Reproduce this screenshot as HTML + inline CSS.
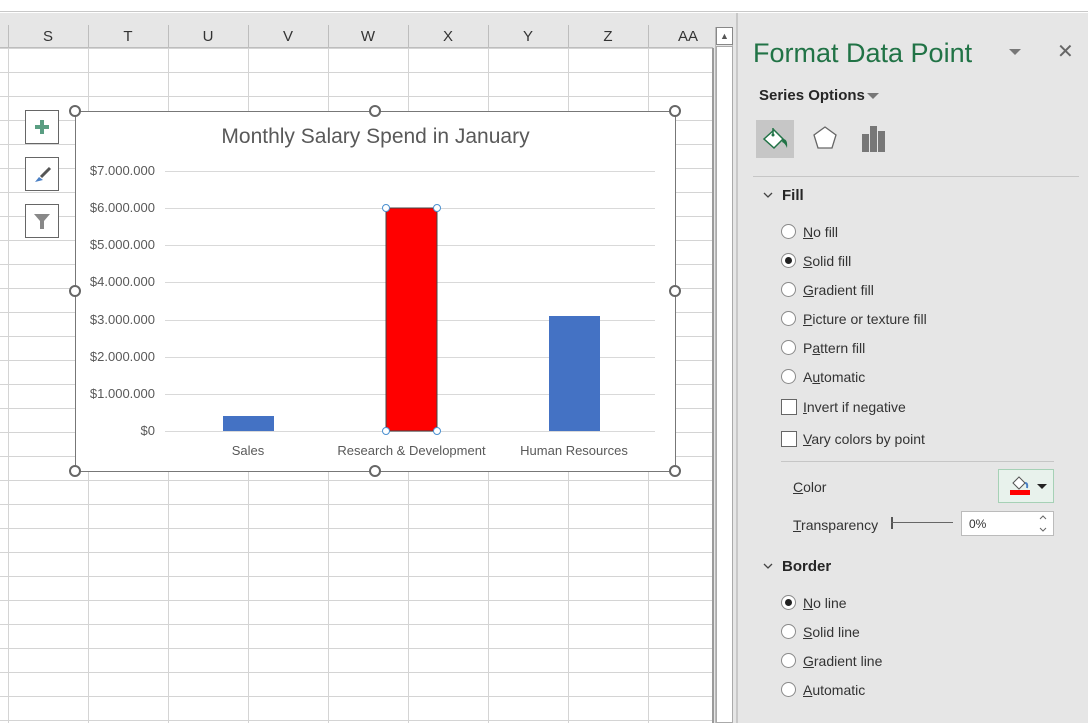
<!DOCTYPE html>
<html><head><style>
*{margin:0;padding:0;box-sizing:border-box}
body{width:1088px;height:723px;overflow:hidden;background:#fff;font-family:"Liberation Sans",sans-serif;position:relative}
.a{position:absolute}
.hd{font-size:15px;color:#333;text-align:center;top:28px;width:80px}
.t{font-size:14px;color:#333}
.rad{width:15px;height:15px;border:1px solid #8a8a8a;border-radius:50%;background:#fff}
.chk{width:16px;height:16px;border:1px solid #666;background:#fff}
.yl{font-size:13px;color:#595959;text-align:right;width:80px;left:75px}
.h{width:12px;height:12px;border:2px solid #666;border-radius:50%;background:#fff}
.tri{width:0;height:0;border-left:6px solid transparent;border-right:6px solid transparent;border-top:6px solid #777}
u{text-decoration:underline}
</style></head><body>
<div class="a" style="left:0;top:0;width:1088px;height:12px;background:#fff;border-bottom:1px solid #c8c8c8"></div>
<div class="a" style="left:0;top:13px;width:738px;height:710px;background:#e6e6e6"></div>
<div class="a" style="left:0;top:48px;width:713px;height:675px;background:#fff;
background-image:linear-gradient(#d4d4d4 1px,transparent 1px),linear-gradient(90deg,#d4d4d4 1px,transparent 1px);
background-size:80px 24px;background-position:8px 0,8px 0"></div>
<div class="a" style="left:0;top:25px;width:713px;height:23px;background-image:linear-gradient(90deg,#bdbdbd 1px,transparent 1px);background-size:80px 23px;background-position:8px 0;border-bottom:1px solid #bdbdbd"></div>
<div class="a hd" style="left:8px">S</div><div class="a hd" style="left:88px">T</div><div class="a hd" style="left:168px">U</div><div class="a hd" style="left:248px">V</div><div class="a hd" style="left:328px">W</div><div class="a hd" style="left:408px">X</div><div class="a hd" style="left:488px">Y</div><div class="a hd" style="left:568px">Z</div><div class="a hd" style="left:648px">AA</div>
<div class="a" style="left:712px;top:48px;width:2px;height:675px;background:#9a9a9a"></div>
<div class="a" style="left:715px;top:27px;width:18px;height:696px;background:#e6e6e6;border-left:1px solid #bbb;border-right:1px solid #bbb"></div>
<div class="a" style="left:716px;top:27px;width:17px;height:18px;background:#fff;border:1px solid #888;font-size:9px;text-align:center;line-height:16px;color:#555">▲</div>
<div class="a" style="left:716px;top:46px;width:17px;height:677px;background:#fff;border:1px solid #aaa"></div>
<div class="a" style="left:736px;top:13px;width:2px;height:710px;background:#c8c8c8"></div>
<div class="a" style="left:25px;top:110px;width:34px;height:34px;border:1px solid #666;background:#fff"><svg width="32" height="32"><path d="M16 9 V23 M9 16 H23" stroke="#5a9e82" stroke-width="4"/></svg></div>
<div class="a" style="left:25px;top:157px;width:34px;height:34px;border:1px solid #666;background:#fff"><svg width="32" height="32"><path d="M9 24 L13 19 L17 22 Z" fill="#4a7fc4"/><path d="M15 19 L24 10" stroke="#555" stroke-width="3"/></svg></div>
<div class="a" style="left:25px;top:204px;width:34px;height:34px;border:1px solid #666;background:#fff"><svg width="32" height="32"><path d="M8 9 H24 L18 16 V24 H14 V16 Z" fill="#888"/></svg></div>
<div class="a" style="left:75px;top:111px;width:601px;height:361px;background:#fff;border:1px solid #777"></div>
<div class="a" style="left:75px;top:125px;width:601px;text-align:center;font-size:21px;color:#595959">Monthly Salary Spend in January</div>
<svg class="a" style="left:0;top:0" width="713" height="723">
<g stroke="#d9d9d9" stroke-width="1">
<line x1="165" x2="655" y1="171.5" y2="171.5"/><line x1="165" x2="655" y1="208.5" y2="208.5"/><line x1="165" x2="655" y1="245.5" y2="245.5"/><line x1="165" x2="655" y1="282.5" y2="282.5"/><line x1="165" x2="655" y1="320.5" y2="320.5"/><line x1="165" x2="655" y1="357.5" y2="357.5"/><line x1="165" x2="655" y1="394.5" y2="394.5"/><line x1="165" x2="655" y1="431.5" y2="431.5"/></g>
<rect x="223" y="416" width="51" height="15" fill="#4472c4"/>
<rect x="386" y="208" width="51" height="223" fill="#ff0000" stroke="#444" stroke-width="1"/>
<rect x="549" y="316" width="51" height="115" fill="#4472c4"/>
<g fill="#fff" stroke="#4a90d0"><circle cx="386" cy="208" r="3.5"/><circle cx="437" cy="208" r="3.5"/><circle cx="386" cy="431" r="3.5"/><circle cx="437" cy="431" r="3.5"/></g>
</svg>
<div class="a yl" style="top:163px">$7.000.000</div><div class="a yl" style="top:200px">$6.000.000</div><div class="a yl" style="top:237px">$5.000.000</div><div class="a yl" style="top:274px">$4.000.000</div><div class="a yl" style="top:312px">$3.000.000</div><div class="a yl" style="top:349px">$2.000.000</div><div class="a yl" style="top:386px">$1.000.000</div><div class="a yl" style="top:423px">$0</div>
<div class="a" style="left:198px;top:443px;width:100px;text-align:center;font-size:13px;color:#595959">Sales</div>
<div class="a" style="left:320px;top:443px;width:183px;text-align:center;font-size:13px;color:#595959">Research &amp; Development</div>
<div class="a" style="left:504px;top:443px;width:140px;text-align:center;font-size:13px;color:#595959">Human Resources</div>
<div class="a h" style="left:69px;top:105px"></div><div class="a h" style="left:369px;top:105px"></div><div class="a h" style="left:669px;top:105px"></div>
<div class="a h" style="left:69px;top:285px"></div><div class="a h" style="left:669px;top:285px"></div>
<div class="a h" style="left:69px;top:465px"></div><div class="a h" style="left:369px;top:465px"></div><div class="a h" style="left:669px;top:465px"></div>
<div class="a" style="left:738px;top:13px;width:350px;height:710px;background:#e6e6e6"></div>
<div class="a" style="left:753px;top:38px;font-size:27px;color:#217346">Format Data Point</div>
<div class="a tri" style="left:1009px;top:49px"></div>
<div class="a" style="left:1057px;top:39px;font-size:20px;color:#666">✕</div>
<div class="a" style="left:759px;top:87px;font-size:15px;font-weight:bold;color:#262626">Series Options</div>
<div class="a tri" style="left:867px;top:93px"></div>
<div class="a" style="left:756px;top:120px;width:38px;height:38px;background:#c6c6c6"></div>
<svg class="a" style="left:756px;top:120px" width="38" height="38"><path d="M8 19 L18 10 L27 19 L18 28 Z" fill="#fff" stroke="#217346" stroke-width="1.5"/><path d="M17 8 V15" stroke="#217346" stroke-width="1.5"/><circle cx="17" cy="15" r="1.5" fill="#217346"/><path d="M27 19 Q32 19 31 28 Q29 23 26 22 Z" fill="#217346"/></svg>
<svg class="a" style="left:808px;top:120px" width="34" height="38"><path d="M17 7 L28 15 L24 28 H10 L6 15 Z" fill="#fff" stroke="#666" stroke-width="1.3"/></svg>
<svg class="a" style="left:858px;top:120px" width="34" height="38"><rect x="4" y="14" width="7" height="18" fill="#777"/><rect x="12" y="6" width="7" height="26" fill="#777"/><rect x="20" y="11" width="7" height="21" fill="#777"/></svg>
<div class="a" style="left:753px;top:176px;width:326px;height:1px;background:#c6c6c6"></div>
<svg class="a" style="left:763px;top:191px" width="10" height="8"><path d="M1 2 L5 6 L9 2" fill="none" stroke="#444" stroke-width="1.3"/></svg>
<div class="a" style="left:782px;top:187px;font-size:15px;font-weight:bold;color:#262626">Fill</div>
<div class="a rad" style="left:781px;top:224px"></div><div class="a t" style="left:803px;top:224px"><u>N</u>o fill</div>
<div class="a rad" style="left:781px;top:253px"></div><div class="a" style="left:785px;top:257px;width:7px;height:7px;border-radius:50%;background:#222"></div><div class="a t" style="left:803px;top:253px"><u>S</u>olid fill</div>
<div class="a rad" style="left:781px;top:282px"></div><div class="a t" style="left:803px;top:282px"><u>G</u>radient fill</div>
<div class="a rad" style="left:781px;top:311px"></div><div class="a t" style="left:803px;top:311px"><u>P</u>icture or texture fill</div>
<div class="a rad" style="left:781px;top:340px"></div><div class="a t" style="left:803px;top:340px">P<u>a</u>ttern fill</div>
<div class="a rad" style="left:781px;top:369px"></div><div class="a t" style="left:803px;top:369px">A<u>u</u>tomatic</div>
<div class="a chk" style="left:781px;top:399px"></div><div class="a t" style="left:803px;top:399px"><u>I</u>nvert if negative</div>
<div class="a chk" style="left:781px;top:431px"></div><div class="a t" style="left:803px;top:431px"><u>V</u>ary colors by point</div>
<div class="a" style="left:781px;top:461px;width:273px;height:1px;background:#c6c6c6"></div>
<div class="a t" style="left:793px;top:479px"><u>C</u>olor</div>
<div class="a" style="left:998px;top:469px;width:56px;height:34px;background:#e8f2ec;border:1px solid #a6d1b6"></div>
<svg class="a" style="left:1008px;top:474px" width="26" height="22"><path d="M5 9 L11 3 L17 9 L11 15 Z" fill="#fff" stroke="#555"/><path d="M17 9 Q20 9 19 14" stroke="#4a7fc4" stroke-width="2" fill="none"/><rect x="2" y="16" width="20" height="5" fill="#f00"/></svg>
<div class="a" style="left:1037px;top:484px;width:0;height:0;border-left:5px solid transparent;border-right:5px solid transparent;border-top:5px solid #222"></div>
<div class="a t" style="left:793px;top:517px"><u>T</u>ransparency</div>
<div class="a" style="left:891px;top:517px;width:2px;height:12px;background:#555"></div>
<div class="a" style="left:891px;top:522px;width:62px;height:1px;background:#666"></div>
<div class="a" style="left:961px;top:511px;width:93px;height:25px;background:#fff;border:1px solid #bbb;font-size:12px;color:#333;padding:5px 7px">0%</div>
<svg class="a" style="left:1038px;top:514px" width="10" height="20"><path d="M2 5 L5 2 L8 5 M2 14 L5 17 L8 14" fill="none" stroke="#666"/></svg>
<svg class="a" style="left:763px;top:562px" width="10" height="8"><path d="M1 2 L5 6 L9 2" fill="none" stroke="#444" stroke-width="1.3"/></svg>
<div class="a" style="left:782px;top:558px;font-size:15px;font-weight:bold;color:#262626">Border</div>
<div class="a rad" style="left:781px;top:595px"></div><div class="a" style="left:785px;top:599px;width:7px;height:7px;border-radius:50%;background:#222"></div><div class="a t" style="left:803px;top:595px"><u>N</u>o line</div>
<div class="a rad" style="left:781px;top:624px"></div><div class="a t" style="left:803px;top:624px"><u>S</u>olid line</div>
<div class="a rad" style="left:781px;top:653px"></div><div class="a t" style="left:803px;top:653px"><u>G</u>radient line</div>
<div class="a rad" style="left:781px;top:682px"></div><div class="a t" style="left:803px;top:682px"><u>A</u>utomatic</div>
</body></html>
